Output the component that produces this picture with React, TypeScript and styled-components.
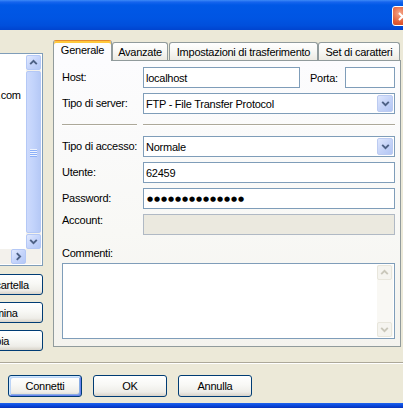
import React from 'react';
import styled, { createGlobalStyle, css } from 'styled-components';

const GlobalStyle = createGlobalStyle`
  html, body {
    margin: 0;
    padding: 0;
    background: #ece9d8;
  }
  body {
    font-family: "Liberation Sans", Arial, sans-serif;
    font-size: 11px;
    letter-spacing: -0.25px;
    color: #000;
  }
  * {
    box-sizing: border-box;
  }
`;

const Window = styled.div`
  width: 403px;
  height: 408px;
  overflow: hidden;
  display: flex;
  flex-direction: column;
  background: #ece9d8;
`;

const TitleBar = styled.div`
  flex: none;
  height: 30px;
  display: flex;
  justify-content: flex-end;
  align-items: flex-start;
  background: linear-gradient(#3d8af7 0, #1665ee 2px, #0058e6 5px, #0055e3 60%, #004fdc 85%, #0044cf 100%);
`;

const CloseButton = styled.div`
  width: 21px;
  height: 20px;
  margin-top: 6px;
  margin-right: -10px;
  border: 1px solid #fff;
  border-radius: 3px;
  background: radial-gradient(circle at 35% 35%, #f5a88c 0, #e35b32 55%, #c2401c 100%);
  display: flex;
  align-items: center;
  justify-content: center;
`;

const Main = styled.div`
  flex: none;
  height: 332px;
  display: flex;
  align-items: flex-start;
  gap: 10px;
  padding-top: 10px;
`;

const Sidebar = styled.div`
  flex: none;
  width: 95px;
  margin-left: -52px;
  padding-top: 13px;
  display: flex;
  flex-direction: column;
`;

const Tree = styled.div`
  height: 213px;
  border: 1px solid #7f9db9;
  background: #fff;
  padding: 1px;
  display: grid;
  grid-template-columns: 1fr 15px;
  grid-template-rows: 1fr 15px;
`;

const TreeList = styled.div`
  overflow: hidden;
  padding-top: 32px;
`;

const TreeItem = styled.div<{ $indent: number }>`
  height: 16px;
  line-height: 16px;
  padding-left: ${p => p.$indent}px;
  white-space: nowrap;
`;

const VScroll = styled.div<{ $off?: boolean }>`
  display: flex;
  flex-direction: column;
  background: ${p => (p.$off ? '#f9f8f4' : '#f3f1ec')};
`;

const HScroll = styled.div`
  display: flex;
  background: #f3f1ec;
`;

const ScrollCorner = styled.div`
  background: #f3f1ec;
`;

const Arrow = styled.div<{ $off?: boolean }>`
  flex: none;
  width: 15px;
  height: 15px;
  border-radius: 2px;
  display: flex;
  align-items: center;
  justify-content: center;
  ${p =>
    p.$off
      ? css`
          border: 1px solid #e8e6dc;
          background: #f5f4ef;
        `
      : css`
          border: 1px solid #b4c8f6;
          background: linear-gradient(135deg, #e2eafe 0%, #c6d5fb 50%, #b4c8f6 100%);
        `}
`;

const Thumb = styled.div`
  flex: 1;
  margin: 1px 0;
  border: 1px solid #b4c8f6;
  border-radius: 2px;
  background: linear-gradient(90deg, #cddafc 0%, #c2d3fb 50%, #b6c9f6 100%);
  display: flex;
  flex-direction: column;
  align-items: center;
  justify-content: center;
  gap: 1px;
`;

const Grip = styled.div`
  width: 7px;
  height: 1px;
  background: #eef3fe;
  box-shadow: 0 1px 0 #8cb0f8;
`;

const Track = styled.div`
  flex: 1;
`;

const Chev = styled.svg<{ $rot: number }>`
  display: block;
  transform: rotate(${p => p.$rot}deg);
`;

const Chevron = ({ dir, color = '#4d6185' }: { dir: 'up' | 'down' | 'left' | 'right'; color?: string }) => {
  const rot = { up: 0, right: 90, down: 180, left: 270 }[dir];
  return (
    <Chev $rot={rot} width="9" height="9" viewBox="0 0 9 9">
      <path d="M1.2 6.2 L4.5 2.9 L7.8 6.2" fill="none" stroke={color} strokeWidth="1.9" />
    </Chev>
  );
};

const PushButton = styled.div<{ $default?: boolean }>`
  border: 1px solid #003c74;
  border-radius: 3px;
  background: linear-gradient(#ffffff 0%, #f8f8f5 45%, #eeede8 80%, #d8d3c9 100%);
  display: flex;
  align-items: center;
  justify-content: center;
  white-space: nowrap;
  ${p =>
    p.$default &&
    css`
      box-shadow: inset 1px 1px 0 #cee7ff, inset -1px -1px 0 #6982ee, inset 2px 2px 0 #bcd4f6, inset -2px -2px 0 #89ade4;
    `}
`;

const SideButton = styled(PushButton)`
  width: 95px;
  height: 21px;
`;

const ButtonStack = styled.div`
  margin-top: 8px;
  display: flex;
  flex-direction: column;
  gap: 7px;
`;

const TabArea = styled.div`
  flex: none;
  width: 348px;
  display: flex;
  flex-direction: column;
`;

const TabStrip = styled.div`
  height: 20px;
  display: flex;
  align-items: flex-end;
`;

const Tab = styled.div<{ $active?: boolean; $w: number }>`
  position: relative;
  width: ${p => p.$w}px;
  border: 1px solid #919b9c;
  border-bottom: none;
  border-radius: 3px 3px 0 0;
  display: flex;
  align-items: center;
  justify-content: center;
  white-space: nowrap;
  ${p =>
    p.$active
      ? css`
          z-index: 1;
          height: 21px;
          margin-bottom: -1px;
          padding-bottom: 2px;
          border-top: 1px solid #e68b2c;
          box-shadow: inset 0 2px 0 #ffc83c;
          background: #fcfcfe;
        `
      : css`
          height: 18px;
          margin-left: ${p.$w > 100 ? 1 : 0}px;
          background: linear-gradient(#ffffff 0%, #f7f7f4 50%, #eceae3 100%);
        `}
`;

const Panel = styled.div`
  height: 287px;
  border: 1px solid #919b9c;
  background: linear-gradient(#fcfcfe 0%, #f8f8f5 60%, #f4f3ee 100%);
  padding: 6px 5px 7px 8px;
  display: flex;
  flex-direction: column;
`;

const FormGrid = styled.div`
  display: grid;
  grid-template-columns: 75px 1fr;
  grid-template-rows: 21px 21px 12px 21px 21px 21px 21px;
  column-gap: 6px;
  row-gap: 5px;
`;

const Label = styled.div<{ $top?: boolean }>`
  display: flex;
  align-items: ${p => (p.$top ? 'flex-start' : 'center')};
  line-height: 13px;
  white-space: nowrap;
`;

const Rule = styled.div`
  align-self: center;
  height: 2px;
  border-top: 1px solid #aca899;
  border-bottom: 1px solid #ffffff;
`;

const Field = styled.div<{ $disabled?: boolean; $w?: number }>`
  height: 21px;
  ${p => p.$w && css`width: ${p.$w}px; flex: none;`}
  border: 1px solid ${p => (p.$disabled ? '#b0b9c4' : '#7f9db9')};
  background: ${p => (p.$disabled ? '#ebe9df' : '#ffffff')};
  padding: 0 2px;
  display: flex;
  align-items: center;
  white-space: nowrap;
  overflow: hidden;
`;

const Dots = styled.span`
  font-family: "DejaVu Sans", sans-serif;
  font-size: 7px;
  letter-spacing: 0.9px;
  padding-left: 1px;
`;

const HostRow = styled.div`
  display: flex;
  align-items: center;
`;

const PortLabel = styled.span`
  margin-left: 10px;
  margin-right: auto;
`;

const Select = styled.div`
  height: 21px;
  border: 1px solid #7f9db9;
  background: #fff;
  padding: 1px 1px 1px 2px;
  display: flex;
  align-items: center;
  white-space: nowrap;
`;

const SelectText = styled.span`
  flex: 1;
`;

const DropButton = styled.div`
  width: 16px;
  height: 17px;
  border: 1px solid #bccbf1;
  border-radius: 2px;
  background: linear-gradient(135deg, #dfe7fd 0%, #c6d4f8 50%, #b3c6f4 100%);
  display: flex;
  align-items: center;
  justify-content: center;
`;

const CommentLabel = styled.div`
  margin-top: 12px;
  margin-bottom: 3px;
  line-height: 13px;
`;

const Memo = styled.div`
  height: 76px;
  border: 1px solid #7f9db9;
  background: #fff;
  padding: 1px;
  display: flex;
  justify-content: flex-end;
`;

const MemoScroll = styled(VScroll)`
  width: 16px;
`;

const Etched = styled.div`
  flex: none;
  height: 2px;
  border-top: 1px solid #aca899;
  border-bottom: 1px solid #ffffff;
`;

const Footer = styled.div`
  flex: none;
  height: 39px;
  padding: 11px 0 0 8px;
  display: flex;
  align-items: flex-start;
  gap: 11px;
`;

const DialogButton = styled(PushButton)`
  width: 74px;
  height: 22px;
`;

const BottomFrame = styled.div`
  flex: none;
  height: 5px;
  background: linear-gradient(#1f63ec 0%, #0a48dc 50%, #0632b8 100%);
`;

const App = () => {
  return (
    <>
      <GlobalStyle />
      <Window>
        <TitleBar>
          <CloseButton>
            <svg width="11" height="11" viewBox="0 0 11 11">
              <path d="M2 2 L9 9 M9 2 L2 9" stroke="#fff" strokeWidth="2" />
            </svg>
          </CloseButton>
        </TitleBar>

        <Main>
          <Sidebar>
            <Tree>
              <TreeList>
                <TreeItem $indent={8}>esempio.com</TreeItem>
              </TreeList>
              <VScroll>
                <Arrow>
                  <Chevron dir="up" />
                </Arrow>
                <Thumb>
                  <Grip />
                  <Grip />
                  <Grip />
                  <Grip />
                </Thumb>
                <Arrow>
                  <Chevron dir="down" />
                </Arrow>
              </VScroll>
              <HScroll>
                <Arrow>
                  <Chevron dir="left" />
                </Arrow>
                <Track />
                <Arrow>
                  <Chevron dir="right" />
                </Arrow>
              </HScroll>
              <ScrollCorner />
            </Tree>
            <ButtonStack>
              <SideButton>Nuova cartella</SideButton>
              <SideButton>Rinomina</SideButton>
              <SideButton>Copia</SideButton>
            </ButtonStack>
          </Sidebar>

          <TabArea>
            <TabStrip>
              <Tab $active $w={59}>Generale</Tab>
              <Tab $w={56}>Avanzate</Tab>
              <Tab $w={149}>Impostazioni di trasferimento</Tab>
              <Tab $w={82}>Set di caratteri</Tab>
            </TabStrip>
            <Panel>
              <FormGrid>
                <Label>Host:</Label>
                <HostRow>
                  <Field $w={157}>localhost</Field>
                  <PortLabel>Porta:</PortLabel>
                  <Field $w={50} />
                </HostRow>

                <Label>Tipo di server:</Label>
                <Select>
                  <SelectText>FTP - File Transfer Protocol</SelectText>
                  <DropButton>
                    <Chevron dir="down" />
                  </DropButton>
                </Select>

                <Rule />
                <Rule />

                <Label>Tipo di accesso:</Label>
                <Select>
                  <SelectText>Normale</SelectText>
                  <DropButton>
                    <Chevron dir="down" />
                  </DropButton>
                </Select>

                <Label>Utente:</Label>
                <Field>62459</Field>

                <Label>Password:</Label>
                <Field>
                  <Dots>●●●●●●●●●●●●●●</Dots>
                </Field>

                <Label $top>Account:</Label>
                <Field $disabled />
              </FormGrid>

              <CommentLabel>Commenti:</CommentLabel>
              <Memo>
                <MemoScroll $off>
                  <Arrow $off>
                    <Chevron dir="up" color="#c9c7ba" />
                  </Arrow>
                  <Track />
                  <Arrow $off>
                    <Chevron dir="down" color="#c9c7ba" />
                  </Arrow>
                </MemoScroll>
              </Memo>
            </Panel>
          </TabArea>
        </Main>

        <Etched />
        <Footer>
          <DialogButton $default>Connetti</DialogButton>
          <DialogButton>OK</DialogButton>
          <DialogButton>Annulla</DialogButton>
        </Footer>
        <BottomFrame />
      </Window>
    </>
  );
};

export default App;
